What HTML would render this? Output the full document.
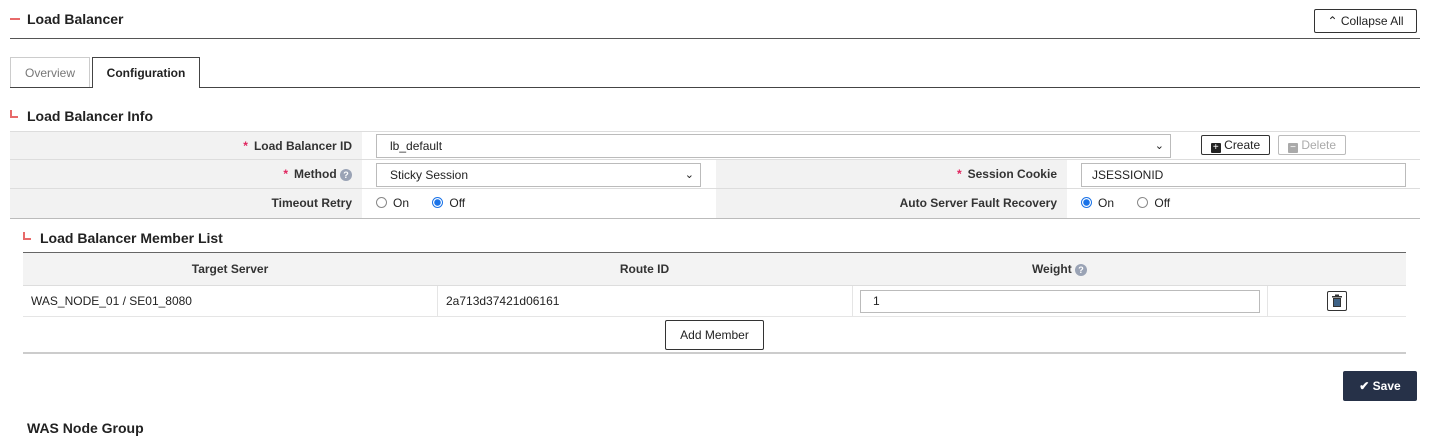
<!DOCTYPE html>
<html><head><meta charset="utf-8"><style>
*{box-sizing:border-box;margin:0;padding:0}
body{width:1446px;height:426px;overflow:hidden;background:#fff;font-family:"Liberation Sans",sans-serif;font-size:12px;color:#222;position:relative}
.a{position:absolute}
.b{font-weight:bold}
.lbl{background:#f2f2f2;text-align:right;font-weight:bold;padding-right:10px;line-height:28px;color:#333}
.req{color:#e0245e;margin-right:6px}
.q{display:inline-block;width:12px;height:12px;border-radius:50%;background:#9aa3b5;color:#fff;font-size:9px;line-height:12px;text-align:center;vertical-align:middle}
.radio{display:inline-block;width:11px;height:11px;border:1px solid #888;border-radius:50%;vertical-align:-1px;margin-right:6px;background:#fff}
.radio.on{border:1px solid #1a73e8;background:radial-gradient(circle,#1a73e8 0 3px,#fff 3.5px)}
.btn{border:1px solid #333;border-radius:2px;background:#fff;text-align:center}
</style></head><body>
<div class="a" style="left:10px;top:18px;width:10px;height:2px;background:#e86a6a"></div>
<div class="a b" style="left:27px;top:11px;font-size:14px;color:#222">Load Balancer</div>
<div class="a btn" style="left:1314px;top:9px;width:103px;height:24px;line-height:22px;font-size:12px">⌃ Collapse All</div>
<div class="a" style="left:10px;top:38px;width:1410px;height:1px;background:#555"></div>

<div class="a" style="left:10px;top:57px;width:80px;height:30px;border:1px solid #ccc;border-bottom:none;color:#777;text-align:center;line-height:30px">Overview</div>
<div class="a b" style="left:92px;top:57px;width:108px;height:31px;border:1px solid #444;border-bottom:none;background:#fff;text-align:center;line-height:30px;z-index:2">Configuration</div>
<div class="a" style="left:10px;top:87px;width:1410px;height:1px;background:#444"></div>

<div class="a" style="left:10px;top:110px;width:2px;height:8px;background:#e86a6a"></div>
<div class="a" style="left:10px;top:116px;width:8px;height:2px;background:#e86a6a"></div>
<div class="a b" style="left:27px;top:108px;font-size:14px">Load Balancer Info</div>

<div class="a" style="left:10px;top:131px;width:1410px;height:1px;background:#ddd"></div>
<div class="a lbl" style="left:10px;top:132px;width:352px;height:27px"><span class="req">*</span>Load Balancer ID</div>
<div class="a" style="left:376px;top:134px;width:795px;height:24px;border:1px solid #bbb;line-height:22px;padding-left:13px">lb_default<span style="position:absolute;right:6px;top:0;font-size:11px">⌄</span></div>
<div class="a btn" style="left:1201px;top:135px;width:69px;height:20px;line-height:18px"><span style="display:inline-block;width:10px;height:10px;background:#222;color:#fff;font-size:10px;line-height:10px;vertical-align:-1px;border-radius:1px">+</span> Create</div>
<div class="a btn" style="left:1278px;top:135px;width:68px;height:20px;line-height:18px;border-color:#bbb;color:#aaa"><span style="display:inline-block;width:10px;height:10px;background:#aaa;color:#fff;font-size:10px;line-height:9px;vertical-align:-1px;border-radius:1px">−</span> Delete</div>
<div class="a" style="left:10px;top:159px;width:1410px;height:1px;background:#ddd"></div>

<div class="a lbl" style="left:10px;top:160px;width:352px;height:28px"><span class="req">*</span>Method <span class="q">?</span></div>
<div class="a" style="left:376px;top:163px;width:325px;height:24px;border:1px solid #bbb;line-height:22px;padding-left:13px">Sticky Session<span style="position:absolute;right:6px;top:0;font-size:11px">⌄</span></div>
<div class="a lbl" style="left:716px;top:160px;width:351px;height:28px"><span class="req">*</span>Session Cookie</div>
<div class="a" style="left:1081px;top:163px;width:325px;height:24px;border:1px solid #bbb;line-height:22px;padding-left:10px">JSESSIONID</div>
<div class="a" style="left:10px;top:188px;width:1410px;height:1px;background:#ddd"></div>

<div class="a lbl" style="left:10px;top:189px;width:352px;height:29px">Timeout Retry</div>
<div class="a" style="left:376px;top:189px;line-height:29px"><span class="radio"></span>On&nbsp;&nbsp;&nbsp;&nbsp;&nbsp;&nbsp;&nbsp;<span class="radio on"></span>Off</div>
<div class="a lbl" style="left:716px;top:189px;width:351px;height:29px">Auto Server Fault Recovery</div>
<div class="a" style="left:1081px;top:189px;line-height:29px"><span class="radio on"></span>On&nbsp;&nbsp;&nbsp;&nbsp;&nbsp;&nbsp;&nbsp;<span class="radio"></span>Off</div>
<div class="a" style="left:10px;top:218px;width:1410px;height:1px;background:#bbb"></div>

<div class="a" style="left:23px;top:232px;width:2px;height:8px;background:#e86a6a"></div>
<div class="a" style="left:23px;top:238px;width:8px;height:2px;background:#e86a6a"></div>
<div class="a b" style="left:40px;top:230px;font-size:14px">Load Balancer Member List</div>

<div class="a" style="left:23px;top:252px;width:1383px;height:1px;background:#666"></div>
<div class="a b" style="left:23px;top:253px;width:1383px;height:32px;background:#f3f3f3;line-height:32px;color:#333">
<span class="a" style="left:0;width:414px;text-align:center">Target Server</span>
<span class="a" style="left:414px;width:415px;text-align:center">Route ID</span>
<span class="a" style="left:829px;width:415px;text-align:center">Weight <span class="q">?</span></span>
</div>
<div class="a" style="left:23px;top:285px;width:1383px;height:1px;background:#ddd"></div>
<div class="a" style="left:31px;top:286px;line-height:30px">WAS_NODE_01 / SE01_8080</div>
<div class="a" style="left:437px;top:286px;width:1px;height:30px;background:#e5e5e5"></div>
<div class="a" style="left:446px;top:286px;line-height:30px">2a713d37421d06161</div>
<div class="a" style="left:852px;top:286px;width:1px;height:30px;background:#e5e5e5"></div>
<div class="a" style="left:860px;top:290px;width:400px;height:23px;border:1px solid #bbb;line-height:21px;padding-left:12px">1</div>
<div class="a" style="left:1267px;top:286px;width:1px;height:30px;background:#e5e5e5"></div>
<div class="a" style="left:1327px;top:291px;width:20px;height:20px;border:1px solid #333;border-radius:2px">
<svg width="18" height="18" viewBox="0 0 18 18"><rect x="4" y="4" width="10" height="1.5" fill="#333"/><rect x="7" y="2.5" width="4" height="1.5" fill="#333"/><rect x="5" y="6" width="8" height="9" fill="#333"/><rect x="6.5" y="7" width="1" height="7" fill="#4a90d9"/><rect x="8.5" y="7" width="1" height="7" fill="#4a90d9"/><rect x="10.5" y="7" width="1" height="7" fill="#4a90d9"/></svg></div>
<div class="a" style="left:23px;top:316px;width:1383px;height:1px;background:#e5e5e5"></div>
<div class="a btn" style="left:665px;top:320px;width:99px;height:30px;line-height:28px">Add Member</div>
<div class="a" style="left:23px;top:352px;width:1383px;height:2px;background:#ccc"></div>

<div class="a b" style="left:1343px;top:371px;width:74px;height:30px;background:#263148;border-radius:2px;color:#fff;line-height:30px;text-align:center">✔ Save</div>
<div class="a b" style="left:27px;top:420px;font-size:14px">WAS Node Group</div>
</body></html>
